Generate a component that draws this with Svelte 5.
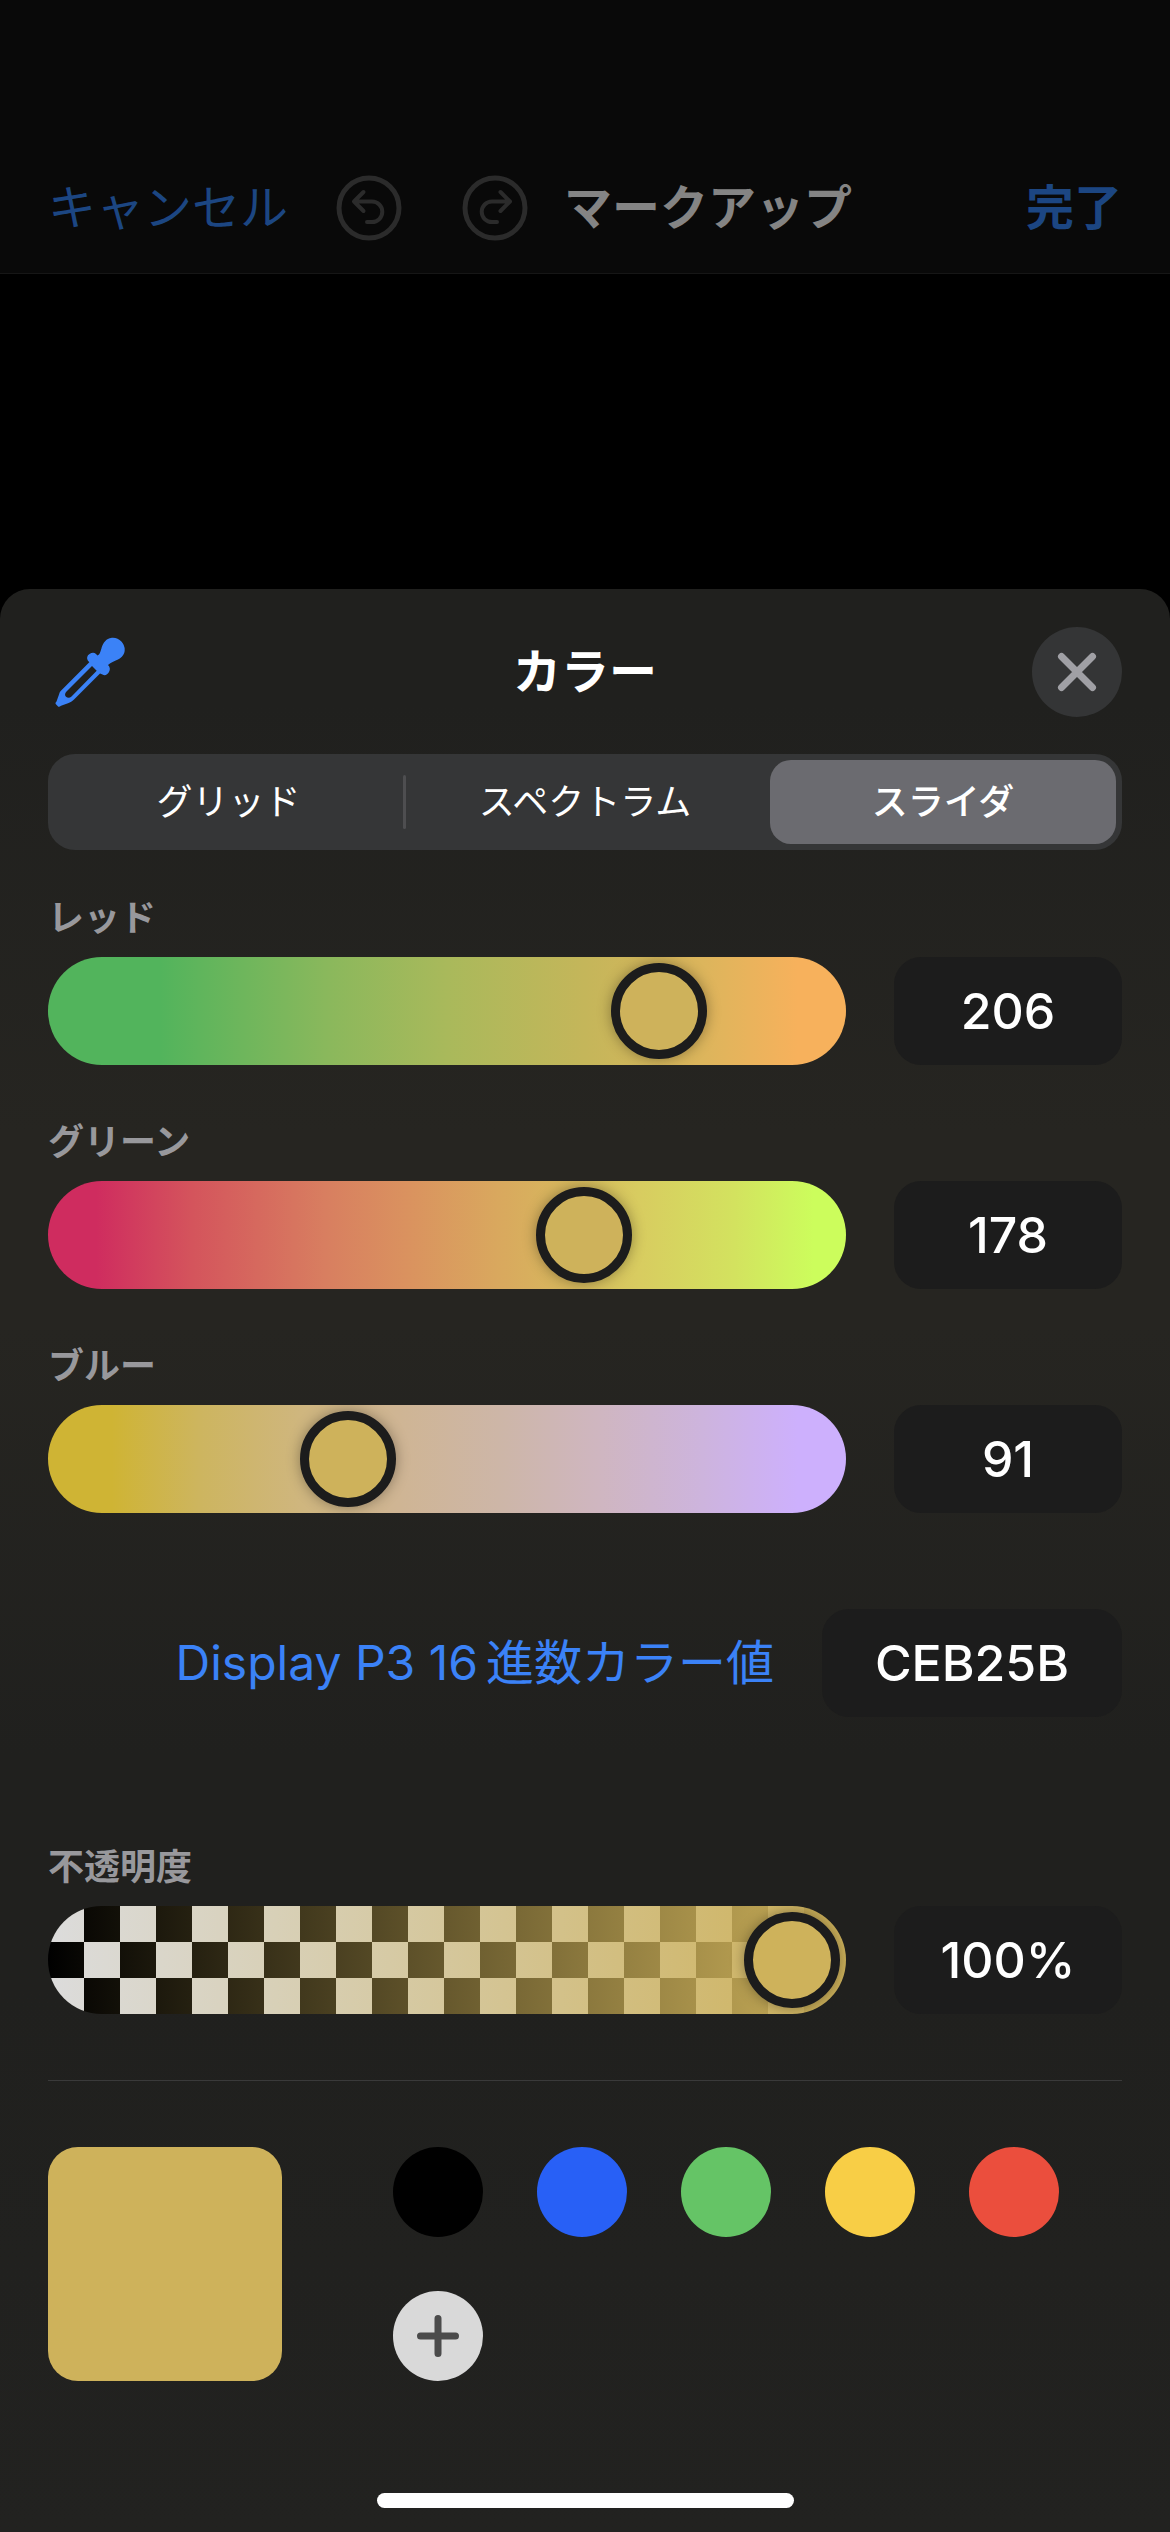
<script lang="ts">
    interface Channel {
        id: string;
        label: string;
        value: number;
    }

    let channels = $state<Channel[]>([
        { id: 'red', label: 'レッド', value: 206 },
        { id: 'green', label: 'グリーン', value: 178 },
        { id: 'blue', label: 'ブルー', value: 91 }
    ]);
    let opacity = $state(100);
    let tab = $state('スライダ');

    const tabs = ['グリッド', 'スペクトラム', 'スライダ'];
    const swatches = [
        { name: 'ブラック', color: '#000000' },
        { name: 'ブルー', color: '#2860f6' },
        { name: 'グリーン', color: '#65c466' },
        { name: 'イエロー', color: '#f8ce46' },
        { name: 'レッド', color: '#eb4e3d' }
    ];

    let hex = $derived(
        channels.map((c) => Number(c.value).toString(16).padStart(2, '0')).join('').toUpperCase()
    );

    function setOpacity(e: Event) {
        const n = parseInt((e.target as HTMLInputElement).value);
        if (!isNaN(n)) opacity = Math.min(100, Math.max(0, n));
    }
</script>

<div class="screen" style="--picked: #{hex}">
    <header class="toolbar">
        <button class="link">キャンセル</button>
        <button class="round undo" aria-label="取り消す">
            <svg viewBox="0 0 66 66"><circle cx="33" cy="33" r="30" /><path d="M27.500 17L18 26.500 27.500 36M18.500 26.500H36a10.300 10.300 0 0 1 0 20.600H31" /></svg>
        </button>
        <button class="round redo" aria-label="やり直す">
            <svg viewBox="0 0 66 66"><circle cx="33" cy="33" r="30" /><path d="M38.500 17L48 26.500 38.500 36M47.500 26.500H30a10.300 10.300 0 0 0 0 20.600H35" /></svg>
        </button>
        <h1>マークアップ</h1>
        <button class="link done">完了</button>
    </header>

    <main class="sheet">
        <div class="title-row">
            <button class="dropper" aria-label="スポイト">
                <svg viewBox="0 0 72 72">
                    <path d="M45 18.500C47.500 15 47 11 50 6.500C53 2.500 56 1.700 59 1.700A12 12 0 0 1 70.700 14C70.700 18 68 21.500 64 23.500C60 25.500 57 26 54 29C56 31 56.500 33 55 36C53.500 39 50.500 40 48.500 38.500L46 37.500L20 63.500C18 65.500 16.500 66.500 14 67.200L7 69.700C6 70.800 5 71 4.300 70.700L1.700 68C1.300 67.300 1.500 66.500 2.500 65.500L5 58.500C5.500 57 5.700 56 6.700 55L35.300 26.300L33.800 24.500C32.500 22.500 33 19.500 35.500 18C38 16.300 40.500 16.500 42 18L43.500 19.500ZM38 30L12.500 55.500C10.500 57.500 10.800 59.500 12 60.700C13.500 62 15.500 62.300 17.500 60.500L42.700 34.700Z" />
                </svg>
            </button>
            <h2>カラー</h2>
            <button class="close" aria-label="閉じる">
                <svg viewBox="0 0 90 90"><path d="M29.500 29.500l31 31M60.500 29.500l-31 31" /></svg>
            </button>
        </div>

        <div class="tabs" role="tablist">
            {#each tabs as name}
                <button role="tab" aria-selected={tab === name} class:active={tab === name} onclick={() => (tab = name)}>
                    <span>{name}</span>
                </button>
            {/each}
        </div>

        {#each channels as channel}
            <section class="channel">
                <label for={channel.id}>{channel.label}</label>
                <div class="row">
                    <input id={channel.id} class="slider {channel.id}" type="range" min="0" max="255" bind:value={channel.value} />
                    <input class="field" type="text" inputmode="numeric" aria-label="{channel.label}の値" bind:value={channel.value} />
                </div>
            </section>
        {/each}

        <div class="hex-row">
            <button class="space"><span>Display P3 16</span><span>進数カラー値</span></button>
            <input class="field hex" type="text" aria-label="16進数カラー値" value={hex} />
        </div>

        <section class="channel">
            <label for="opacity">不透明度</label>
            <div class="row">
                <input id="opacity" class="slider opacity" type="range" min="0" max="100" bind:value={opacity} />
                <input class="field" type="text" aria-label="不透明度の値" value="{opacity}%" onchange={setOpacity} />
            </div>
        </section>

        <hr />

        <div class="palette">
            <div class="current"></div>
            <div class="swatches">
                {#each swatches as swatch}
                    <button aria-label={swatch.name} style="background: {swatch.color}"></button>
                {/each}
                <button class="add" aria-label="カラーを追加">
                    <svg viewBox="0 0 90 90"><path d="M45 27.500v35M27.500 45h35" /></svg>
                </button>
            </div>
        </div>

        <div class="home"></div>
    </main>
</div>

<style>
    :global(body) {
        margin: 0;
        background: #000;
    }

    .screen {
        min-height: 100vh;
        display: flex;
        flex-direction: column;
        background: #000;
        color: #fff;
        font-family: Inter, "Noto Sans CJK JP", sans-serif;
        font-size: 48px;
    }

    button, input {
        font: inherit;
        color: inherit;
        margin: 0;
        padding: 0;
        border: 0;
        background: none;
        box-sizing: border-box;
    }

    button { cursor: pointer; }

    h1, h2 {
        margin: 0;
        font-size: 48px;
        font-weight: 700;
        line-height: 72px;
    }

    svg {
        display: block;
        width: 100%;
        height: 100%;
        fill: none;
        stroke-linecap: round;
        stroke-linejoin: round;
    }

    .toolbar {
        display: flex;
        align-items: center;
        height: 131px;
        padding: 142px 48px 0;
        background: #090909;
        border-bottom: 1px solid #161616;
    }

    .toolbar h1 {
        margin-left: 36px;
        color: #848484;
    }

    .link {
        color: #1c4682;
        line-height: 72px;
    }

    .done {
        margin-left: auto;
        font-weight: 700;
    }

    .round {
        width: 66px;
        height: 66px;
        stroke: #2b2b2b;
        stroke-width: 5;
    }

    .round path { stroke-width: 4; }

    .undo { margin-left: 48px; }
    .redo { margin-left: 60px; }

    .sheet {
        flex: 1;
        display: flex;
        flex-direction: column;
        margin-top: 315px;
        padding: 38px 48px 24px;
        border-radius: 30px 30px 0 0;
        background: linear-gradient(#20201e, #20201e 6%, #262521 28%, #262521 38%, #20201e 60%, #20201e 72%, #222220);
    }

    .title-row {
        display: grid;
        grid-template-columns: 90px 1fr 90px;
        align-items: center;
        text-align: center;
    }

    .dropper {
        width: 72px;
        height: 72px;
        margin-left: 6px;
    }

    .dropper path {
        fill: #3b82f7;
        fill-rule: evenodd;
    }

    .close {
        width: 90px;
        height: 90px;
        border-radius: 50%;
        background: #343536;
        stroke: #a0a0a5;
        stroke-width: 7;
    }

    .tabs {
        display: grid;
        grid-template-columns: repeat(3, 1fr);
        height: 96px;
        margin: 37px 0 44px;
        border-radius: 27px;
        background: #353637;
        font-size: 36px;
    }

    .tabs button {
        display: flex;
        padding: 6px;
    }

    .tabs span {
        flex: 1;
        border-radius: 21px;
        line-height: 84px;
    }

    .tabs button:first-child { padding-right: 0; }

    .tabs button:first-child::after {
        content: "";
        width: 3px;
        height: 54px;
        align-self: center;
        border-radius: 2px;
        background: #4e4e50;
    }

    .tabs .active { font-weight: 500; }
    .tabs .active span { background: #6b6b70; }

    .channel {
        display: flex;
        flex-direction: column;
        gap: 15px;
        margin-bottom: 53px;
    }

    .channel label {
        color: #98989c;
        font-size: 36px;
        font-weight: 700;
        line-height: 48px;
    }

    .row {
        display: flex;
        gap: 48px;
    }

    .field {
        width: 228px;
        height: 108px;
        flex: none;
        border-radius: 27px;
        background: #1c1c1c;
        font-size: 50px;
        font-weight: 500;
        text-align: center;
    }

    .slider {
        appearance: none;
        flex: 1;
        min-width: 0;
        height: 108px;
        padding: 0 6px;
        border-radius: 54px;
        overflow: hidden;
    }

    .slider::-webkit-slider-thumb {
        appearance: none;
        box-sizing: border-box;
        width: 96px;
        height: 96px;
        border: 9px solid #1c1c1c;
        border-radius: 50%;
        background: var(--picked);
        box-shadow: 0 0 14px rgba(0, 0, 0, 0.35);
    }

    .red { background: linear-gradient(90deg, #52b45c 14%, #8ab85c 35%, #a9b95b 50%, #c4b65a 67%, #dcb55c 82%, #f7b15c 94%); }
    .green { background: linear-gradient(90deg, #cf2c5f 6%, #d4545c 18%, #d87f60 35%, #da925f 45%, #d9a95e 57%, #d6b95d 66%, #d8cc60 74%, #d3e25f 86%, #ccfd5c 96%); }
    .blue { background: linear-gradient(90deg, #cfb434 8%, #cdb55f 19%, #cfb67f 32%, #cfb594 44%, #cdb6a8 57%, #cfb6c0 69%, #cdb4dd 82%, #cdb0fd 94%); }

    .opacity {
        background:
            linear-gradient(90deg, transparent, var(--picked)),
            conic-gradient(#000 25%, #dcdcdc 0 50%, #000 0 75%, #dcdcdc 0) 0 0 / 72px 72px;
    }

    .hex-row {
        display: flex;
        justify-content: flex-end;
        align-items: center;
        gap: 48px;
        margin: 43px 0 126px;
    }

    .space {
        display: flex;
        gap: 8px;
        color: #3b82f7;
        line-height: 72px;
    }

    .hex { width: 300px; }

    hr {
        width: 100%;
        height: 1px;
        margin: 13px 0 66px;
        border: 0;
        background: #3a3a3a;
    }

    .palette {
        display: flex;
        gap: 111px;
    }

    .current {
        width: 234px;
        height: 234px;
        flex: none;
        border-radius: 30px;
        background: var(--picked);
    }

    .swatches {
        display: grid;
        grid-template-columns: repeat(5, 90px);
        gap: 54px;
    }

    .swatches button {
        width: 90px;
        height: 90px;
        border-radius: 50%;
    }

    .swatches .add {
        background: #d9d9d9;
        stroke: #4b4b4b;
        stroke-width: 7;
    }

    .home {
        width: 417px;
        height: 15px;
        margin: auto auto 0;
        border-radius: 8px;
        background: #fff;
    }
</style>
